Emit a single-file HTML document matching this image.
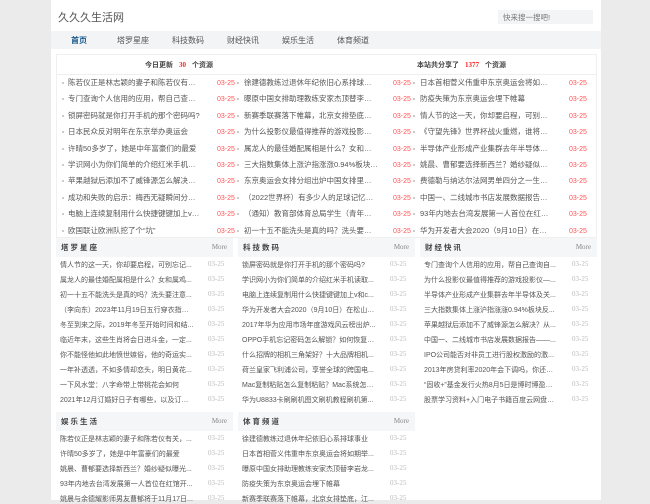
<!DOCTYPE html>
<html><head><meta charset="utf-8"><style>
*{margin:0;padding:0;box-sizing:border-box}
body{width:650px;height:500px;overflow:hidden;background:#ebebeb;font-family:"Liberation Sans","Noto Sans CJK SC",sans-serif;color:#444;position:relative}
.wrap{position:absolute;left:51px;top:0;width:550px;height:500px;background:#fff}
.a{position:absolute;white-space:nowrap}
.logo{left:7px;top:9px;font-size:11px;color:#555}
.search{left:447px;top:10px;width:95px;height:14px;background:#f3f4f6;font-size:7.5px;color:#777;padding:2px 0 0 5px}
.nav{position:absolute;left:0;top:31px;width:550px;height:18px;background:#f2f4f6}
.nav span{position:absolute;top:4px;font-size:8px;color:#555}
.box{position:absolute;left:5px;top:54px;width:541px;height:184px;border:1px solid #f0f0f0}
.bh{position:absolute;left:0;top:0;width:539px;height:20px;border-bottom:1px solid #eee}
.bh div{position:absolute;top:5px;font-size:7px;font-weight:bold;color:#444}
.bh b{color:#f22;margin:0 6px;font-family:"Liberation Serif",serif}
.li{position:absolute;font-size:7.5px;color:#555;white-space:nowrap;overflow:hidden;text-overflow:ellipsis}
.dt{position:absolute;font-size:7px;color:#f55}
.dg{position:absolute;font-size:7px;color:#bbb;font-family:"Liberation Serif",serif}
.dot{position:absolute;width:2px;height:2px;background:#ccc}
.sh{position:absolute;height:19px;background:#f5f6f8}
.sh i{position:absolute;left:5px;top:4px;font-style:normal;font-size:7.5px;font-weight:bold;letter-spacing:2px;color:#444}
.sh em{position:absolute;right:6px;top:5px;font-style:normal;font-size:7px;color:#888;font-family:"Liberation Serif",serif}
</style></head><body>
<div class="wrap">
<div class="a logo">久久久生活网</div>
<div class="a search">快来搜一搜吧!</div>
<div class="nav">
<span style="left:20px;color:#1a5a8a;font-weight:bold">首页</span>
<span style="left:66px">塔罗星座</span>
<span style="left:121px">科技数码</span>
<span style="left:176px">财经快讯</span>
<span style="left:231px">娱乐生活</span>
<span style="left:286px">体育频道</span>
</div>
<div class="box"><div class="bh">
<div style="left:88px">今日更新<b>30</b>个资源</div>
<div style="left:360px">本站共分享了<b>1377</b>个资源</div>
</div></div>
</div>
<script>
var W=document.querySelector('.wrap');
function add(h){W.insertAdjacentHTML('beforeend',h)}
var c1=["陈若仪正是林志颖的妻子和陈若仪有关，...","专门查询个人信用的应用，帮自己查询自...","锁屏密码就是你打开手机的那个密码吗?","日本民众反对明年在东京举办奥运会","许晴50多岁了，她是中年富豪们的最爱","学识网小为你们简单的介绍红米手机读取...","苹果越狱后添加不了威锋源怎么解决？从...","成功和失败的启示：梅西无疑瞬间分别是...","电脑上连续复制用什么快捷键键加上v和c...","欧国联让欧洲队挖了个“坑”"];
var c2=["徐建德教练过退休年纪依旧心系排球事业","曝原中国女排助理教练安家杰顶替李岩龙...","新赛季联赛落下帷幕，北京女排垫底，江...","为什么投影仪最值得推荐的游戏投影仪—...","属龙人的最佳婚配属相是什么？女和属鸡...","三大指数集体上涨沪指涨涨0.94%板块反...","东京奥运会女排分组出炉中国女排里约守...","（2022世界杯）有多少人的足球记忆和我...","（通知）教育部体育总局学生（青年）运...","初一十五不能洗头是真的吗？洗头要注意..."];
var c3=["日本首相菅义伟重申东京奥运会将如期举...","防疫失策为东京奥运会埋下帷幕","情人节的这一天，你却要启程，可别忘记...","《守望先锋》世界杯战火重燃，谁将最终...","半导体产业形成产业集群去年半导体及关...","姚晨、曹郁要选择新西兰？婚纱疑似曝光...","费德勒与纳达尔法网男单四分之一生涯第...","中国一、二线城市书店发展数据报告——...","93年内地去台湾发展第一人首位在红馆开...","华为开发者大会2020（9月10日）在松山..."];
for(var i=0;i<10;i++){var y=77+i*16.4;
add('<div class="dot" style="left:11px;top:'+(y+5)+'px"></div><div class="li" style="left:17px;top:'+y+'px;width:134px">'+c1[i]+'</div><div class="dt" style="left:166px;top:'+(y+3)+'px">03-25</div>');
add('<div class="dot" style="left:186px;top:'+(y+5)+'px"></div><div class="li" style="left:193px;top:'+y+'px;width:134px">'+c2[i]+'</div><div class="dt" style="left:342px;top:'+(y+3)+'px">03-25</div>');
add('<div class="dot" style="left:362px;top:'+(y+5)+'px"></div><div class="li" style="left:369px;top:'+y+'px;width:134px">'+c3[i]+'</div><div class="dt" style="left:518px;top:'+(y+3)+'px">03-25</div>');}
function sec(x,y,t,items){
add('<div class="sh" style="left:'+x+'px;top:'+y+'px;width:177px"><i>'+t+'</i><em>More</em></div>');
for(var i=0;i<items.length;i++){var yy=y+22+i*15;
add('<div class="li" style="left:'+(x+4)+'px;top:'+yy+'px;width:134px;font-size:7px">'+items[i]+'</div><div class="dg" style="left:'+(x+152)+'px;top:'+yy+'px">03-25</div>');}}
sec(5,238,"塔罗星座",["情人节的这一天，你却要启程，可别忘记...","属龙人的最佳婚配属相是什么？女和属鸡...","初一十五不能洗头是真的吗？洗头要注意...","（李向东）2023年11月19日五行穿衣指南！","冬至到来之际，2019年冬至开始时间和结...","临近年末，这些生肖将会日进斗金，一定...","你不能怪他如此地愤世嫉俗，他的奇运实...","一年补透透，不如多情却恋头，明日黄花...","一下风水堂：八字命带上带桃花会如何","2021年12月订婚好日子有哪些，以及订婚..."]);
sec(187,238,"科技数码",["锁屏密码就是你打开手机的那个密码吗?","学识网小为你们简单的介绍红米手机读取...","电脑上连续复制用什么快捷键键加上v和c...","华为开发者大会2020（9月10日）在松山湖...","2017年华为应用市场年度游戏风云榜出炉...","OPPO手机忘记密码怎么解锁？如何恢复出...","什么招牌的相机三角架好？十大品牌相机...","荷兰皇家飞利浦公司，享誉全球的跨国电...","Mac复制粘贴怎么复制粘贴？Mac系统怎么...","华为U8833卡刷刷机图文刷机教程刷机第..."]);
sec(369,238,"财经快讯",["专门查询个人信用的应用，帮自己查询自...","为什么投影仪最值得推荐的游戏投影仪—...","半导体产业形成产业集群去年半导体及关...","三大指数集体上涨沪指涨涨0.94%板块反...","苹果越狱后添加不了威锋源怎么解决？从...","中国一、二线城市书店发展数据报告——...","IPO公司能否对非员工进行股权激励的激...","2013年房贷利率2020年会下调吗，你还不...","“固收+”基金发行火热8月5日是博时博盈稳...","股票学习资料+入门电子书籍百度云网盘资..."]);
sec(5,412,"娱乐生活",["陈若仪正是林志颖的妻子和陈若仪有关，...","许晴50多岁了，她是中年富豪们的最爱","姚晨、曹郁要选择新西兰？婚纱疑似曝光...","93年内地去台湾发展第一人首位在红馆开...","姚晨与余德耀影师男友曹郁将于11月17日..."]);
sec(187,412,"体育频道",["徐建德教练过退休年纪依旧心系排球事业","日本首相菅义伟重申东京奥运会将如期举...","曝原中国女排助理教练安家杰顶替李岩龙...","防疫失策为东京奥运会埋下帷幕","新赛季联赛落下帷幕，北京女排垫底，江..."]);
</script>
</body></html>
